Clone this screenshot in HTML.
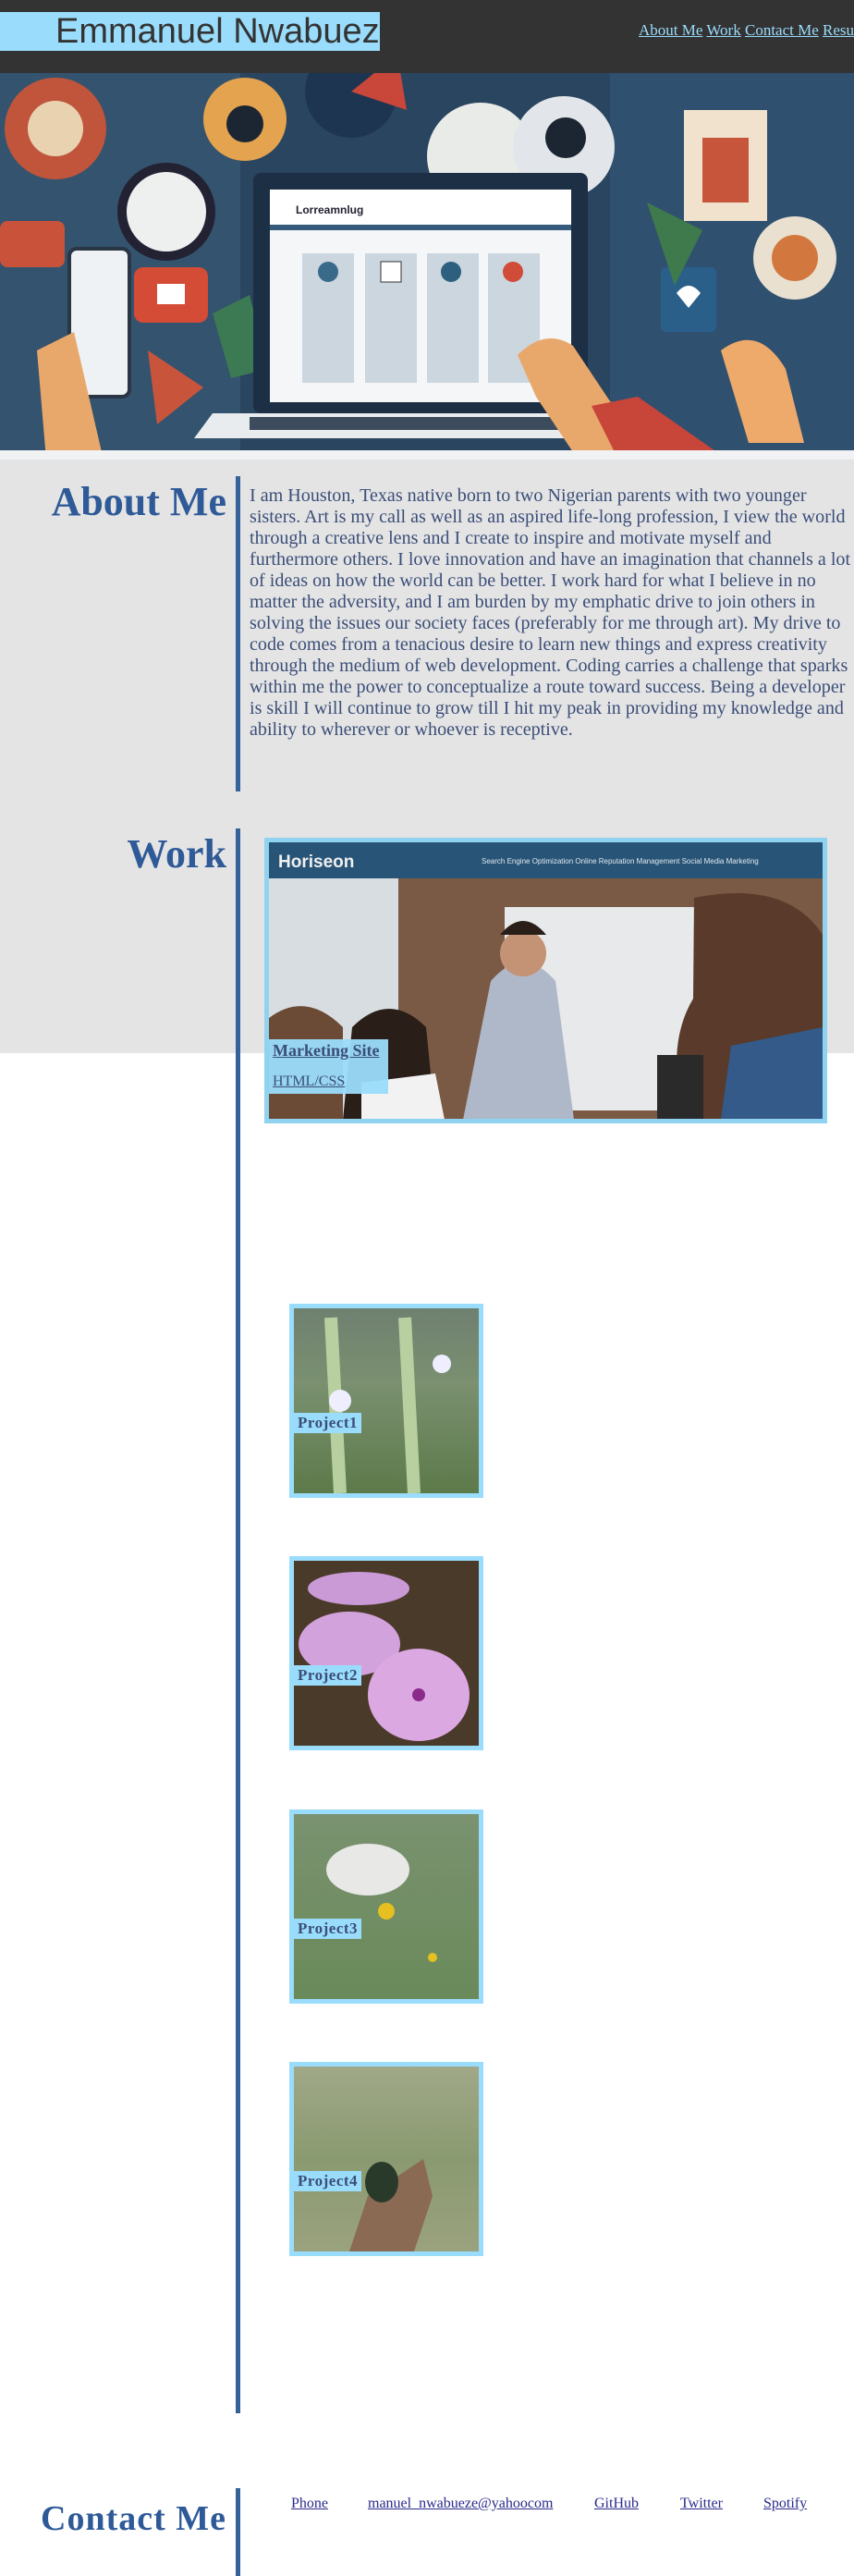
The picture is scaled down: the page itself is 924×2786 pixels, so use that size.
<!DOCTYPE html>
<html><head><meta charset="utf-8"><style>
*{margin:0;padding:0;box-sizing:border-box}
body{width:924px;height:2786px;background:#fff;font-family:"Liberation Serif",serif;position:relative;overflow:hidden}
.hdr{position:absolute;left:0;top:0;width:924px;height:79px;background:#333}
.name{position:absolute;left:0;top:13px;width:411px;height:42px;background:#9adcfb;color:#333;font-family:"Liberation Sans",sans-serif;font-size:38px;line-height:42px;padding-left:60px;white-space:nowrap}
.nav{position:absolute;left:691px;top:23px;white-space:nowrap;font-size:17px}
.nav a{color:#9adcfb;text-decoration:underline}
.hero{position:absolute;left:0;top:79px;width:924px;height:418px}
.gray{position:absolute;left:0;top:497px;width:924px;height:642px;background:#e4e4e4}
.bar{position:absolute;left:255px;width:5px;background:#36629a}
h2{position:absolute;right:679px;color:#2f5a98;font-weight:bold;font-size:44px;white-space:nowrap}
.about{position:absolute;left:270px;top:525px;width:652px;font-size:20.1px;line-height:23px;color:#3b4e78}
.mk{position:absolute;left:286px;top:906px;width:609px;height:309px;border:5px solid #8fd3f0;overflow:hidden}
.lab{position:absolute;left:0;top:213px;width:129px;height:59px;background:rgba(154,220,251,.95);padding:2px 4px}
.lab a{color:#3b4e78;display:block}
.pj{position:absolute;left:313px;width:210px;height:210px;border:5px solid #9adcfb;overflow:hidden}
.pj span{position:absolute;left:0;top:113px;background:#9adcfb;color:#3b4e78;font-weight:bold;font-size:17px;padding:0 4px;line-height:22px;letter-spacing:.5px}
.cl{position:absolute;top:2699px;font-size:16px;color:#2a2a8c;text-decoration:underline;white-space:nowrap}
</style></head><body>
<div class="hdr"><div class="name">Emmanuel Nwabueze</div>
<div class="nav"><a>About Me</a> <a>Work</a> <a>Contact Me</a> <a>Resume</a></div></div>

<svg class="hero" viewBox="0 0 924 418" preserveAspectRatio="none">
<rect width="924" height="418" fill="#2a4560"/>
<rect x="0" y="0" width="260" height="418" fill="#34536f"/>
<rect x="660" y="0" width="264" height="418" fill="#30506f"/>
<circle cx="60" cy="60" r="55" fill="#c0553b"/><circle cx="60" cy="60" r="30" fill="#e8d2b0"/>
<circle cx="180" cy="150" r="48" fill="#eef0f0" stroke="#223" stroke-width="10"/>
<circle cx="265" cy="50" r="45" fill="#e3a34f"/><circle cx="265" cy="55" r="20" fill="#1c2633"/>
<circle cx="380" cy="20" r="50" fill="#1d3550"/><path d="M380 20 L430 -20 L440 40Z" fill="#c8463a"/>
<circle cx="520" cy="90" r="58" fill="#e9ebe8"/><circle cx="610" cy="80" r="55" fill="#e2e6ea"/><circle cx="612" cy="70" r="22" fill="#1c2633"/>
<rect x="740" y="40" width="90" height="120" fill="#f0e2cc"/><rect x="760" y="70" width="50" height="70" fill="#c6553b"/>
<rect x="0" y="160" width="70" height="50" rx="8" fill="#c8533a"/>
<rect x="145" y="210" width="80" height="60" rx="10" fill="#d44b36"/><rect x="170" y="228" width="30" height="22" fill="#fff"/>
<circle cx="860" cy="200" r="45" fill="#e9e0d0"/><circle cx="860" cy="200" r="25" fill="#d2773d"/>
<rect x="715" y="210" width="60" height="70" rx="6" fill="#2a5f8a"/><path d="M732 238 q13 -16 26 0 l-13 16z" fill="#fff"/>
<path d="M700 140 l60 30 l-30 60z" fill="#3e7a4b"/><path d="M160 300 l60 40 l-50 40z" fill="#c8553b"/>
<path d="M230 260 l40 -20 l20 80 l-40 10z" fill="#3b7a52"/>
<rect x="274" y="108" width="362" height="260" rx="8" fill="#1d2f45"/>
<rect x="292" y="126" width="326" height="230" fill="#f4f6f8"/>
<rect x="292" y="126" width="326" height="38" fill="#fff"/><rect x="292" y="164" width="326" height="6" fill="#355a7c"/>
<text x="320" y="152" font-family="Liberation Sans" font-size="12" font-weight="bold" fill="#223">Lorreamnlug</text>
<rect x="327" y="195" width="56" height="140" fill="#cbd6df"/><rect x="395" y="195" width="56" height="140" fill="#cbd6df"/>
<rect x="462" y="195" width="56" height="140" fill="#cbd6df"/><rect x="528" y="195" width="56" height="140" fill="#cbd6df"/>
<circle cx="355" cy="215" r="11" fill="#3a6a8a"/><circle cx="488" cy="215" r="11" fill="#2d5f7f"/><circle cx="555" cy="215" r="11" fill="#d04b38"/><rect x="412" y="204" width="22" height="22" fill="#fff" stroke="#333"/>
<path d="M230 368 L680 368 L700 395 L210 395Z" fill="#e8ecef"/><rect x="270" y="372" width="370" height="14" fill="#3c4c5c"/>
<path d="M560 305 q30 -30 60 -10 l40 60 l60 30 l20 25 l-120 0 l-40 -60z" fill="#e9a86b"/>
<path d="M640 360 l50 -10 l100 70 l-120 0z" fill="#c8453a"/>
<path d="M780 300 q40 -30 70 20 l20 80 l-60 0z" fill="#eeaa6a"/>
<rect x="75" y="190" width="65" height="160" rx="8" fill="#eef2f5" stroke="#2a3644" stroke-width="4"/>
<path d="M40 300 l40 -20 l30 130 l-60 8z" fill="#e9a86b"/>
<rect x="0" y="408" width="924" height="10" fill="#f0f2f4"/>
</svg>

<div class="gray"></div>
<div class="bar" style="top:515px;height:341px"></div>
<h2 style="top:517px">About Me</h2>
<p class="about">I am Houston, Texas native born to two Nigerian parents with two younger sisters. Art is my call as well as an aspired life-long profession, I view the world through a creative lens and I create to inspire and motivate myself and furthermore others. I love innovation and have an imagination that channels a lot of ideas on how the world can be better. I work hard for what I believe in no matter the adversity, and I am burden by my emphatic drive to join others in solving the issues our society faces (preferably for me through art). My drive to code comes from a tenacious desire to learn new things and express creativity through the medium of web development. Coding carries a challenge that sparks within me the power to conceptualize a route toward success. Being a developer is skill I will continue to grow till I hit my peak in providing my knowledge and ability to wherever or whoever is receptive.</p>

<div class="bar" style="top:896px;height:1714px"></div>
<h2 style="top:898px">Work</h2>
<div class="mk">
<svg width="599" height="299" viewBox="0 0 599 299" style="position:absolute;left:0;top:0">
<rect width="599" height="299" fill="#7a5a44"/>
<rect width="599" height="39" fill="#285577"/>
<text x="10" y="27" font-family="Liberation Sans" font-size="19" font-weight="bold" fill="#f0f0f0">Horiseon</text>
<text x="230" y="23" font-family="Liberation Sans" font-size="8" fill="#e0e6ee">Search Engine Optimization    Online Reputation Management    Social Media Marketing</text>
<rect x="0" y="39" width="140" height="260" fill="#d8dde2"/>
<rect x="255" y="70" width="250" height="220" fill="#e7e9ea"/>
<path d="M0 190 q40 -30 80 10 l0 100 l-80 0z" fill="#6b4a36"/>
<path d="M90 200 q40 -40 80 0 l10 100 l-100 0z" fill="#2a1e18"/>
<path d="M100 260 l80 -10 l10 50 l-90 0z" fill="#f2f2f2"/>
<path d="M240 150 q35 -40 70 0 l20 150 l-120 0z" fill="#aeb8c8"/>
<circle cx="275" cy="120" r="25" fill="#c49274"/><path d="M250 100 q25 -30 50 0z" fill="#2a1e18"/>
<path d="M460 60 q100 -20 139 40 l0 199 l-150 0 q-20 -80 10 -130z" fill="#5a3a2a"/>
<path d="M500 220 l99 -20 l0 99 l-110 0z" fill="#335a88"/>
<rect x="420" y="230" width="50" height="70" fill="#2a2a2a"/>
</svg>
<div class="lab"><a style="font-weight:bold;font-size:18px;text-decoration:underline">Marketing Site</a><a style="font-size:16px;margin-top:14px;text-decoration:underline">HTML/CSS</a></div>
</div>

<div class="pj" style="top:1410px;background:linear-gradient(#6f8070,#7a9070 40%,#5d7a4a)"><svg width="200" height="200" style="position:absolute"><path d="M40 10 l10 190" stroke="#b8d0a0" stroke-width="14"/><path d="M120 10 l10 190" stroke="#b8d0a0" stroke-width="14"/><circle cx="160" cy="60" r="10" fill="#eef"/><circle cx="50" cy="100" r="12" fill="#eef"/></svg><span>Project1</span></div>
<div class="pj" style="top:1683px;background:#4a3a2a"><svg width="200" height="200" style="position:absolute"><ellipse cx="70" cy="30" rx="55" ry="18" fill="#c99ad6"/><ellipse cx="60" cy="90" rx="55" ry="35" fill="#d2a2dc"/><ellipse cx="135" cy="145" rx="55" ry="50" fill="#dca8e2"/><circle cx="135" cy="145" r="7" fill="#8a2a8a"/></svg><span>Project2</span></div>
<div class="pj" style="top:1957px;background:linear-gradient(#7a9270,#6a8a5a)"><svg width="200" height="200" style="position:absolute"><ellipse cx="80" cy="60" rx="45" ry="28" fill="#e8e8e6"/><circle cx="100" cy="105" r="9" fill="#e6c020"/><circle cx="150" cy="155" r="5" fill="#e6c020"/></svg><span>Project3</span></div>
<div class="pj" style="top:2230px;background:linear-gradient(#a0a888,#8a9a70 50%,#9aa27e)"><svg width="200" height="200" style="position:absolute"><path d="M60 200 l20 -60 l60 -40 l10 40 l-20 60z" fill="#8a6a52"/><ellipse cx="95" cy="125" rx="18" ry="22" fill="#2a3a2a"/></svg><span>Project4</span></div>

<div class="bar" style="top:2691px;height:95px"></div>
<h2 style="top:2702px;font-size:38px;letter-spacing:1px">Contact Me</h2>
<a class="cl" style="left:315px">Phone</a>
<a class="cl" style="left:398px">manuel_nwabueze@yahoocom</a>
<a class="cl" style="left:643px">GitHub</a>
<a class="cl" style="left:736px">Twitter</a>
<a class="cl" style="left:826px">Spotify</a>
</body></html>
